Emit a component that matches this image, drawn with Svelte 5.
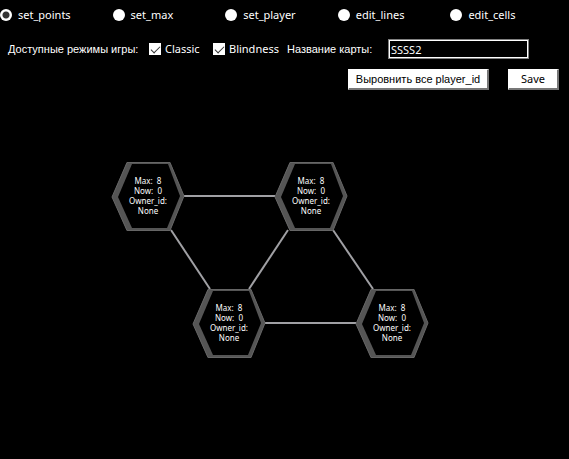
<script>
  const tools = ['set_points', 'set_max', 'set_player', 'edit_lines', 'edit_cells'];
  let tool = $state('set_points');
  let classic = $state(true);
  let blindness = $state(true);
  let mapName = $state('SSSS2');

  const cells = [
    { x: 148, y: 196, max: 8, now: 0, owner: 'None' },
    { x: 311, y: 196, max: 8, now: 0, owner: 'None' },
    { x: 229, y: 323, max: 8, now: 0, owner: 'None' },
    { x: 392, y: 323, max: 8, now: 0, owner: 'None' }
  ];
  // Each link joins a side or corner of one cell to a side or corner of the next.
  const side = { dx: 36, dy: 0 };
  const links = [
    { from: 0, to: 1, ...side },
    { from: 2, to: 3, ...side },
    { from: 0, to: 2, dx: 23, dy: 34, back: 19 },
    { from: 1, to: 2, dx: -23, dy: 34, back: -20 },
    { from: 1, to: 3, dx: 22, dy: 34, back: 19 }
  ];
</script>

<main>
  <svg class="links" aria-hidden="true">
    {#each links as l}
      <line
        x1={cells[l.from].x + l.dx}
        y1={cells[l.from].y + l.dy}
        x2={cells[l.to].x - (l.back ?? l.dx)}
        y2={cells[l.to].y - l.dy}
      />
    {/each}
  </svg>

  {#each cells as cell}
    <div class="cell" style="left: {cell.x}px; top: {cell.y}px">
      <svg width="74" height="70" viewBox="0 0 74 70" aria-hidden="true">
        <polygon points="1,36 16,1 59,1 73,35 59,70 16,70" fill="#555" />
        <polygon points="7,36 21,3 57,3 69,35 56,67 21,67" fill="#000" />
        <path d="M1 36 16 1.5H59L73 35 59 69.5H16Z" fill="none" stroke="#666" stroke-width="1" />
      </svg>
      <p>Max:&nbsp; {cell.max}<br />Now:&nbsp; {cell.now}<br />Owner_id:<br />{cell.owner}</p>
    </div>
  {/each}

  <div class="tools" role="radiogroup" aria-label="Tool">
    {#each tools as name}
      <label><input type="radio" name="tool" value={name} bind:group={tool} />{name}</label>
    {/each}
  </div>

  <div class="settings">
    <span class="modes">Доступные режимы игры:</span>
    <label class="classic"><input type="checkbox" bind:checked={classic} />Classic</label>
    <label class="blind"><input type="checkbox" bind:checked={blindness} />Blindness</label>
    <label class="title" for="map-name">Название карты:</label>
    <input id="map-name" type="text" bind:value={mapName} />
  </div>

  <div class="actions">
    <button type="button" class="align">Выровнить все player_id</button>
    <button type="button" class="save">Save</button>
  </div>
</main>

<style>
  :global(body) {
    background: #000;
  }
  main {
    position: relative;
    min-height: 100vh;
    box-sizing: border-box;
    overflow: hidden;
    color: #fff;
    font: 11px/14px 'Noto Sans', 'Open Sans', sans-serif;
    white-space: nowrap;
  }
  .tools {
    position: relative;
    display: grid;
    grid-template-columns: repeat(5, 1fr);
    padding: 8px 6px 0 0;
  }
  label {
    display: flex;
    align-items: center;
  }
  input,
  button {
    box-sizing: border-box;
    margin: 0;
    font: inherit;
    border-radius: 0;
  }
  input[type='radio'] {
    appearance: none;
    width: 12px;
    height: 12px;
    margin-right: 6px;
    border-radius: 50%;
    background: #fff;
  }
  input[type='radio']:checked {
    background: radial-gradient(circle, #333 0 3px, #fff 4px);
  }
  input[type='checkbox'] {
    appearance: none;
    width: 12px;
    height: 12px;
    margin-right: 4px;
    background: #fff;
  }
  input[type='checkbox']:checked::before {
    content: '';
    display: block;
    box-sizing: border-box;
    width: 9px;
    height: 5px;
    margin: 3px 0 0 2px;
    border: solid #333;
    border-width: 0 0 1px 1px;
    transform: rotate(-45deg);
  }
  .settings {
    position: relative;
    display: flex;
    align-items: center;
    padding: 17px 0 0 8px;
  }
  .modes,
  .title,
  .align {
    font-family: 'Liberation Sans', Arial, sans-serif;
  }
  .modes {
    width: 141px;
  }
  .classic {
    width: 64px;
  }
  .blind {
    width: 74px;
  }
  .title {
    width: 101px;
  }
  #map-name {
    width: 141px;
    height: 20px;
    padding: 1px 2px 0;
    border: 1px solid #808080;
    outline: 0;
    box-shadow: inset 0 0 0 1px #fff;
    color: #fff;
    background: #000;
  }
  .actions {
    position: relative;
    display: flex;
    justify-content: flex-end;
    gap: 19px;
    padding: 10px 10px 0 0;
  }
  button {
    height: 21px;
    padding: 0;
    border: solid;
    border-width: 1px 2px 2px 1px;
    border-color: #fff #777 #777 #fff;
    color: #000;
    background: #fff;
  }
  .align {
    width: 141px;
  }
  .save {
    width: 51px;
  }
  .links {
    position: absolute;
    inset: 0;
    width: 100%;
    height: 100%;
  }
  .links line {
    stroke: #a0a0a4;
    stroke-width: 2;
  }
  .cell {
    position: absolute;
    width: 74px;
    height: 70px;
    margin: -35px 0 0 -37px;
  }
  .cell svg {
    position: absolute;
    inset: 0;
  }
  .cell p {
    position: relative;
    margin: 0;
    padding-top: 15px;
    font-size: 8px;
    line-height: 10px;
    text-align: center;
  }
</style>
